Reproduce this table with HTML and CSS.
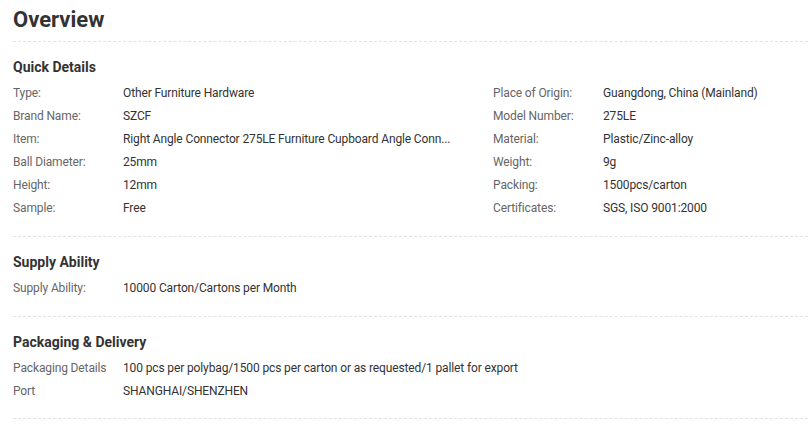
FILE: index.html
```html
<!DOCTYPE html>
<html lang="en">
<head>
<meta charset="utf-8">
<title>Overview</title>
<link rel="stylesheet" href="styles.css">
</head>
<body>
<div class="overview">
  <h1 class="title">Overview</h1>

  <section class="section">
    <h2 class="section-title">Quick Details</h2>
    <div class="details-grid">
      <div class="row"><span class="label">Type:</span><span class="value">Other Furniture Hardware</span></div>
      <div class="row"><span class="label">Place of Origin:</span><span class="value">Guangdong, China (Mainland)</span></div>
      <div class="row"><span class="label">Brand Name:</span><span class="value">SZCF</span></div>
      <div class="row"><span class="label">Model Number:</span><span class="value">275LE</span></div>
      <div class="row"><span class="label">Item:</span><span class="value" title="Right Angle Connector 275LE Furniture Cupboard Angle Connector">Right Angle Connector 275LE Furniture Cupboard Angle Conn...</span></div>
      <div class="row"><span class="label">Material:</span><span class="value">Plastic/Zinc-alloy</span></div>
      <div class="row"><span class="label">Ball Diameter:</span><span class="value">25mm</span></div>
      <div class="row"><span class="label">Weight:</span><span class="value">9g</span></div>
      <div class="row"><span class="label">Height:</span><span class="value">12mm</span></div>
      <div class="row"><span class="label">Packing:</span><span class="value">1500pcs/carton</span></div>
      <div class="row"><span class="label">Sample:</span><span class="value">Free</span></div>
      <div class="row"><span class="label">Certificates:</span><span class="value">SGS, ISO 9001:2000</span></div>
    </div>
  </section>

  <section class="section">
    <h2 class="section-title">Supply Ability</h2>
    <div class="list">
      <div class="row"><span class="label">Supply Ability:</span><span class="value wide">10000 Carton/Cartons per Month</span></div>
    </div>
  </section>

  <section class="section last">
    <h2 class="section-title">Packaging &amp; Delivery</h2>
    <div class="list">
      <div class="row"><span class="label">Packaging Details</span><span class="value wide">100 pcs per polybag/1500 pcs per carton or as requested/1 pallet for export</span></div>
      <div class="row"><span class="label">Port</span><span class="value wide">SHANGHAI/SHENZHEN</span></div>
    </div>
  </section>
</div>
</body>
</html>
```

FILE: styles.css
```css
* {
  box-sizing: border-box;
}

html, body {
  margin: 0;
  padding: 0;
  background: #fff;
}

body {
  font-family: Roboto, "Liberation Sans", Arial, sans-serif;
  color: #333;
}

.overview {
  padding-left: 13px;
}

.title {
  margin: 0;
  padding: 8px 0 9px;
  font-size: 22px;
  line-height: 24px;
  font-weight: 700;
  color: #333;
}

.section {
  border-top: 1px dashed #e2e2e2;
  padding: 15px 0 16px;
}

.section.last {
  border-bottom: 1px dashed #e2e2e2;
  padding-bottom: 15px;
}

.section-title {
  margin: 0 0 5px;
  font-size: 14px;
  line-height: 20px;
  font-weight: 700;
  color: #333;
}

.details-grid {
  display: grid;
  grid-template-columns: 480px 1fr;
}

.row {
  display: flex;
  font-size: 12px;
  line-height: 23px;
  letter-spacing: -0.13px;
  white-space: nowrap;
}

.label {
  flex: 0 0 110px;
  color: #666;
}

.value {
  color: #333;
  max-width: 340px;
}

.value.wide {
  max-width: none;
}
```
